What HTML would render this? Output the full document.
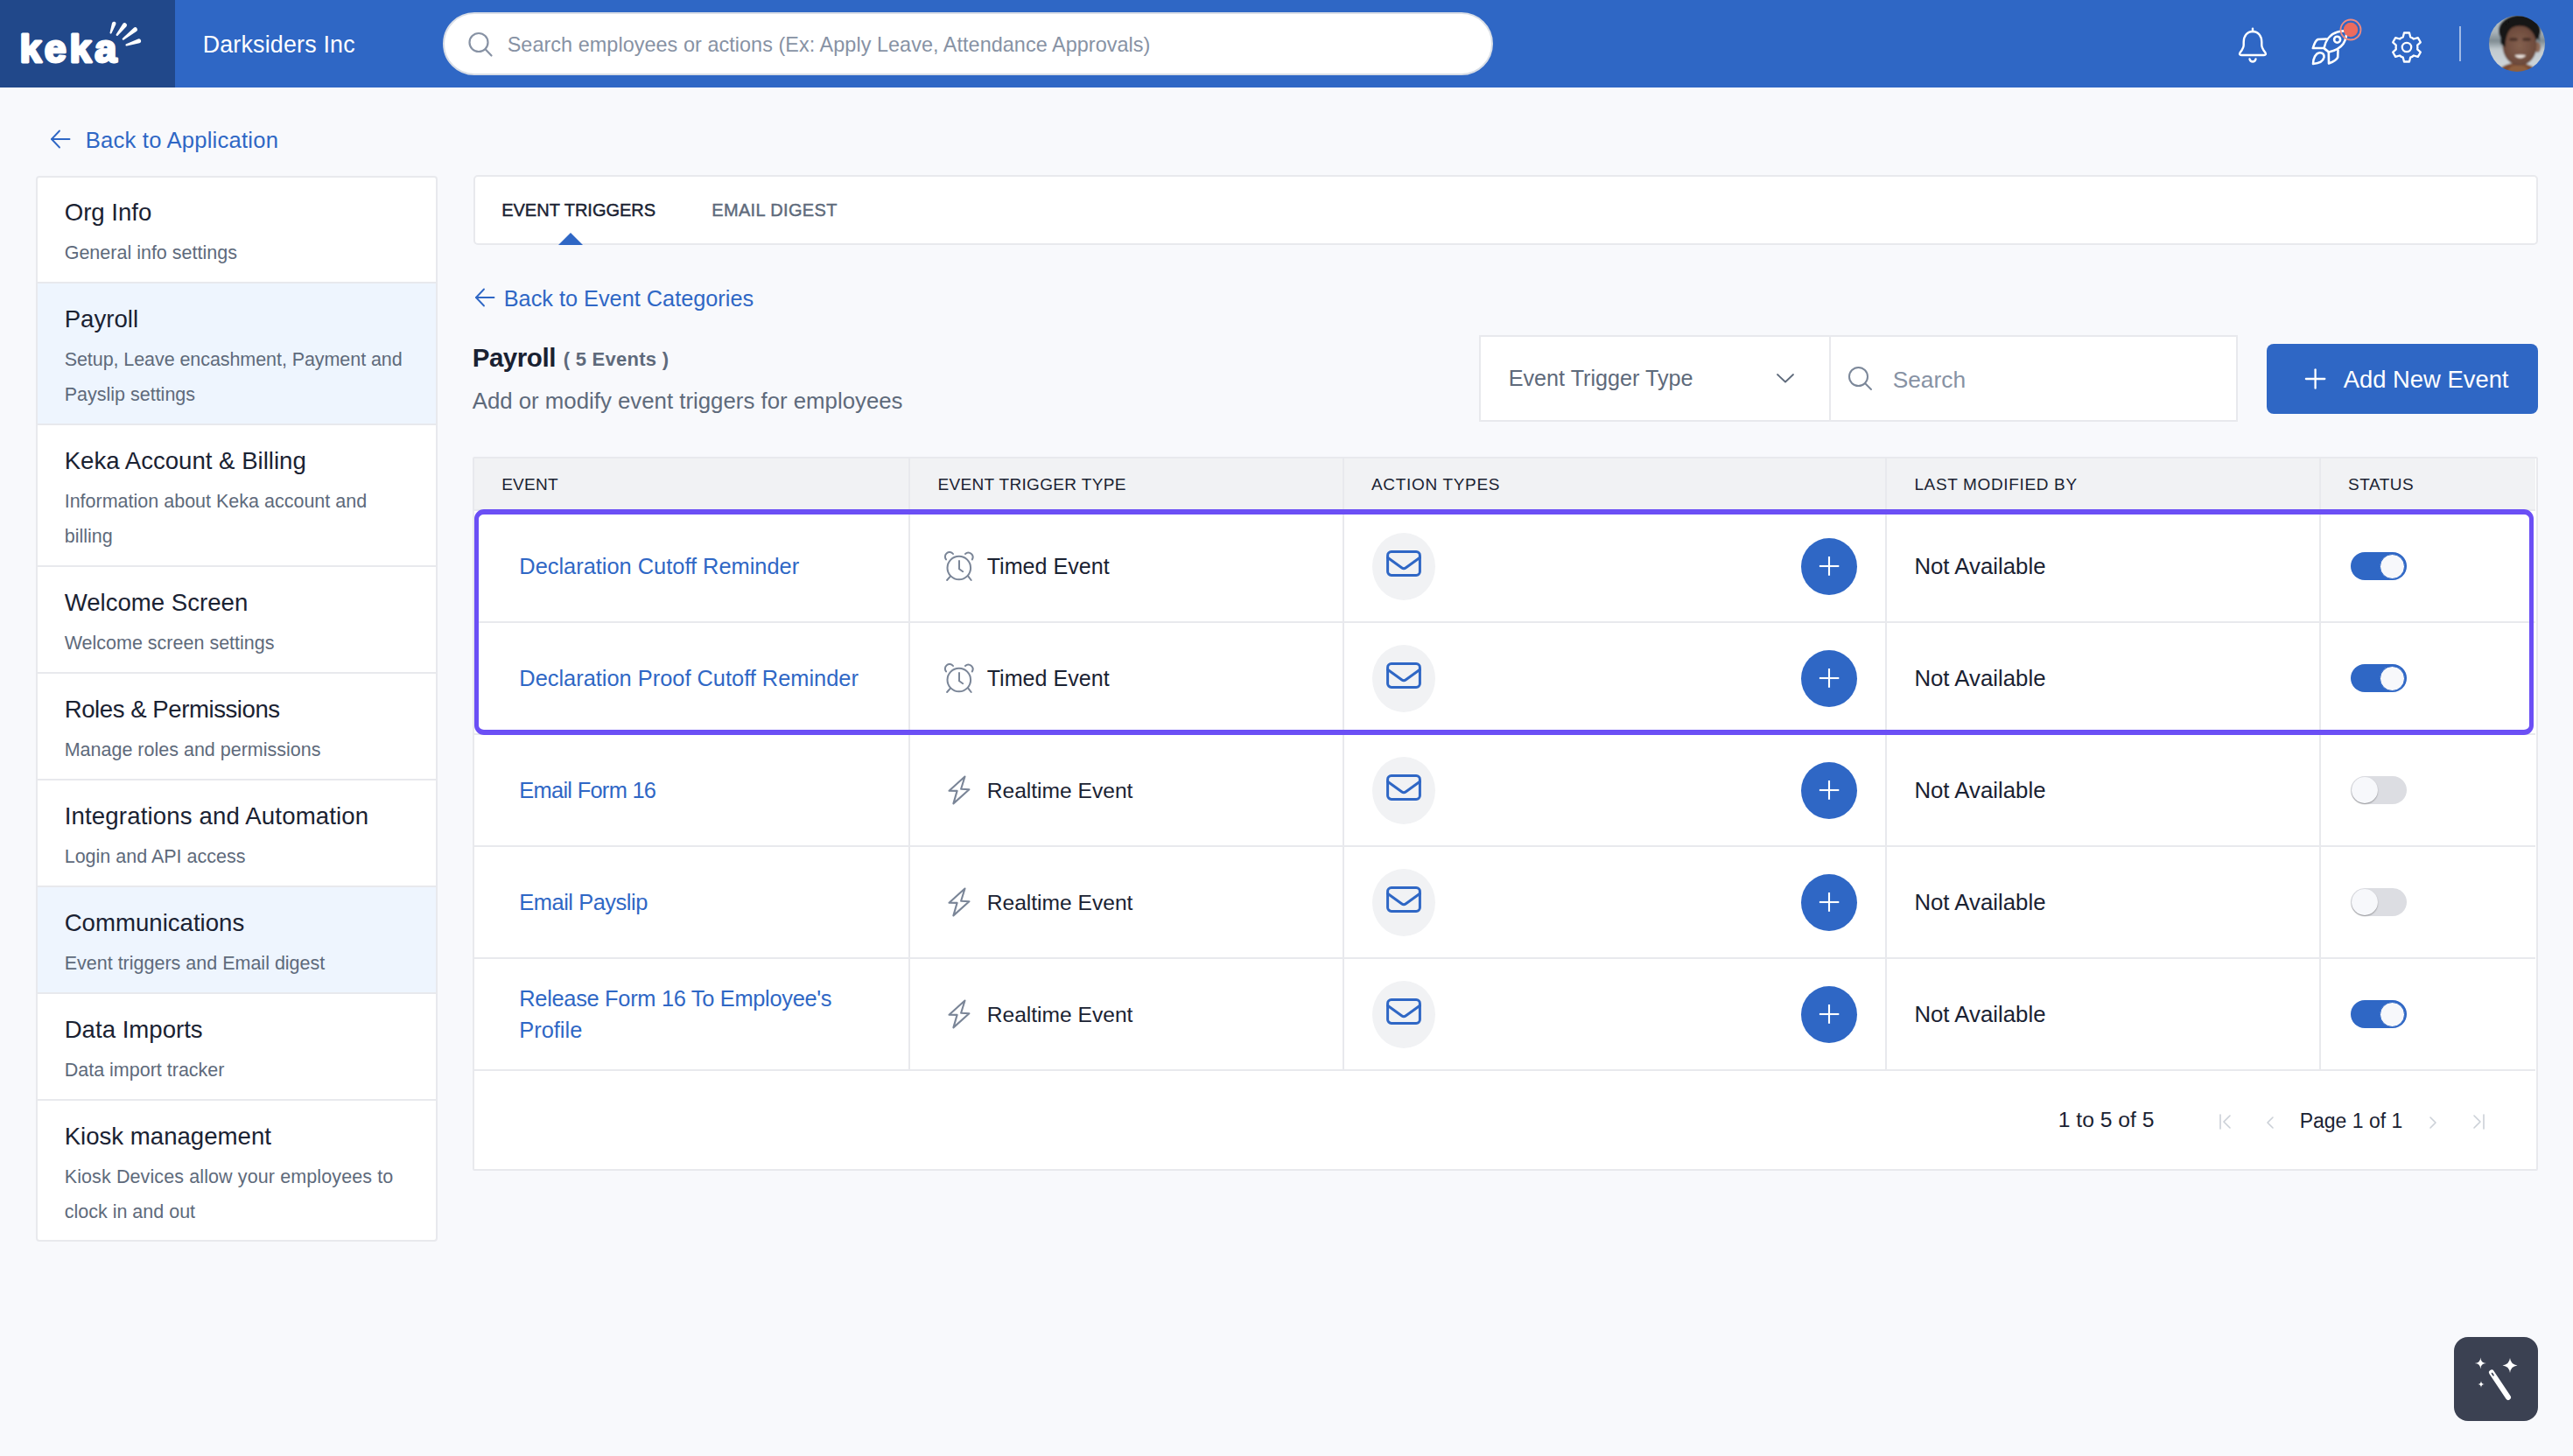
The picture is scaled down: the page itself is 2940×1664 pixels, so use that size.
<!DOCTYPE html>
<html><head><meta charset="utf-8"><title>Keka - Event Triggers</title>
<style>
html,body{margin:0;padding:0;}
html{overflow:hidden;background:#f8f9fc;}
body{width:2940px;height:1664px;overflow:hidden;position:relative;background:#f8f9fc;font-family:"Liberation Sans", sans-serif;}
.t{position:absolute;white-space:nowrap;}
svg{overflow:visible}
</style></head><body>
<div style="position:absolute;left:0px;top:0px;width:2940px;height:100px;background:#2f67c5"></div>
<div style="position:absolute;left:0px;top:0px;width:200px;height:100px;background:#21488a"></div>
<svg style="position:absolute;left:0px;top:0px;" width="200" height="100" viewBox="0 0 200 100"><text x="22.4 50.8 79.4 108.2" y="71" font-family="Liberation Sans" font-weight="700" font-size="45" fill="#fff" stroke="#fff" stroke-width="3" stroke-linejoin="round">keka</text></svg>
<svg style="position:absolute;left:0px;top:0px;" width="200" height="100" viewBox="0 0 200 100"><path d="M127.64 37.86 L132.38 27.75 A2.3 2.3 0 0 0 128.02 26.25 L125.56 37.14 A1.1 1.1 0 0 0 127.64 37.86 Z" fill="#fff"/><path d="M134.75 40.54 L144.55 30.19 A2.6 2.6 0 0 0 140.45 27.01 L132.85 39.06 A1.2 1.2 0 0 0 134.75 40.54 Z" fill="#fff"/><path d="M141.54 45.54 L156.11 35.84 A2.6 2.6 0 0 0 152.89 31.76 L140.06 43.66 A1.2 1.2 0 0 0 141.54 45.54 Z" fill="#fff"/><path d="M144.97 52.54 L159.38 49.18 A2.5 2.5 0 0 0 157.82 44.42 L144.23 50.26 A1.2 1.2 0 0 0 144.97 52.54 Z" fill="#fff"/></svg>
<div class="t" style="left:231.7px;top:37.81px;font-size:26.8px;line-height:26.8px;color:#fff;font-weight:400;letter-spacing:0.2px">Darksiders Inc</div>
<div style="position:absolute;left:506px;top:14px;width:1200px;height:72px;background:#fff;border-radius:36px;box-sizing:border-box;border:2px solid #d9dee6"></div>
<svg style="position:absolute;left:532px;top:34px;" width="34" height="34" viewBox="0 0 34 34"><g stroke="#8792a4" stroke-width="2.2" fill="none" stroke-linecap="round"><circle cx="15" cy="14.5" r="10.5"/><path d="M22.6 22.2 L29.5 29.5"/></g></svg>
<div class="t" style="left:579.7px;top:39.69px;font-size:23.4px;line-height:23.4px;color:#8792a4;font-weight:400;letter-spacing:0.06px">Search employees or actions (Ex: Apply Leave, Attendance Approvals)</div>
<svg style="position:absolute;left:2548px;top:26px;" width="52" height="52" viewBox="0 0 52 52"><g stroke="#fff" stroke-width="2.4" fill="none" stroke-linejoin="round" stroke-linecap="round"><path d="M26 10 C19.5 10 15.7 15.5 15.7 22 L15.7 25.5 C15.7 29 13.5 31.5 11.5 34.3 C10.5 35.8 11.2 37 13 37 L39 37 C40.8 37 41.5 35.8 40.5 34.3 C38.5 31.5 36.3 29 36.3 25.5 L36.3 22 C36.3 15.5 32.5 10 26 10 Z"/><path d="M26 6.8 L26 10"/><path d="M22.5 41.5 C23.5 45.5 28.5 45.5 29.5 41.5"/></g></svg>
<svg style="position:absolute;left:2630px;top:14px;" width="80" height="70" viewBox="0 0 80 70"><g stroke="#fff" stroke-width="2.6" fill="none" stroke-linejoin="round" stroke-linecap="round"><path d="M25.5 41 C27 33 32 25 41 22.5 C45 21.5 49 21.3 51 21.5 C51.5 25 50.5 31 47.5 36 C44 41 38 44 31 45.5 C29 44 27 42.5 25.5 41 Z"/><circle cx="40.6" cy="31.2" r="3.5"/><path d="M28 30.5 L18.5 31 C16 32 14 37 12.8 41 L25.5 41"/><path d="M41.5 43.5 L41.2 51.5 C40 54.5 35 57 31 58.5 L30.8 45.5"/><path d="M13 59 C13 53 16 46.5 20.5 46.2 C24 46 26 48.5 25.5 51.5 C24.5 56 19 58.5 13 59 Z"/></g></svg>
<svg style="position:absolute;left:2672px;top:20px;" width="28" height="28" viewBox="0 0 28 28"><circle cx="14" cy="14" r="11.5" fill="none" stroke="#ef8a80" stroke-width="1.8"/><circle cx="14" cy="14" r="8.2" fill="#ec6b5e"/></svg>
<svg style="position:absolute;left:2731px;top:35px;" width="38" height="38" viewBox="0 0 38 38"><g stroke="#fff" stroke-width="2.3" fill="none" stroke-linejoin="round"><path d="M16 2.5 L22 2.5 L23.2 7.3 C24.6 7.8 25.9 8.6 27 9.5 L31.8 8.1 L34.8 13.3 L31.2 16.7 C31.4 18.2 31.4 19.8 31.2 21.3 L34.8 24.7 L31.8 29.9 L27 28.5 C25.9 29.4 24.6 30.2 23.2 30.7 L22 35.5 L16 35.5 L14.8 30.7 C13.4 30.2 12.1 29.4 11 28.5 L6.2 29.9 L3.2 24.7 L6.8 21.3 C6.6 19.8 6.6 18.2 6.8 16.7 L3.2 13.3 L6.2 8.1 L11 9.5 C12.1 8.6 13.4 7.8 14.8 7.3 Z"/><circle cx="19" cy="19" r="5.2"/></g></svg>
<div style="position:absolute;left:2810px;top:30px;width:2px;height:40px;background:rgba(255,255,255,0.55)"></div>
<svg style="position:absolute;left:2844px;top:18px;" width="64" height="64" viewBox="0 0 64 64"><defs><clipPath id="avc"><circle cx="32" cy="32" r="32"/></clipPath><linearGradient id="avbg" x1="0" y1="0" x2="0" y2="1"><stop offset="0" stop-color="#b9c3c8"/><stop offset="0.3" stop-color="#aab4ba"/><stop offset="0.45" stop-color="#7f8b92"/><stop offset="0.6" stop-color="#c2cacf"/><stop offset="0.85" stop-color="#cdd4d8"/><stop offset="1" stop-color="#9aa3a8"/></linearGradient><radialGradient id="avface" cx="0.5" cy="0.5" r="0.6"><stop offset="0" stop-color="#84604f"/><stop offset="0.7" stop-color="#704d3e"/><stop offset="1" stop-color="#5e4034"/></radialGradient><filter id="avbl"><feGaussianBlur stdDeviation="0.8"/></filter></defs><g clip-path="url(#avc)"><g filter="url(#avbl)"><rect x="-2" y="-2" width="68" height="68" fill="url(#avbg)"/><path d="M10 68 C12 58 20 54 32 54 C44 54 54 58 56 68 Z" fill="#7a4c33"/><path d="M20 66 C22 60 26 57 30 57 L38 57 C42 58 46 61 47 66 Z" fill="#8d5e40"/><ellipse cx="35" cy="17" rx="24" ry="18" fill="#121212"/><ellipse cx="55.5" cy="36" rx="3.5" ry="6" fill="#8e6a58"/><ellipse cx="35" cy="34" rx="19.5" ry="23" fill="url(#avface)"/><path d="M13.5 32 C12 14 22 3 35 3 C48 3 57.5 11 58 30 C54 18 46 11.5 35 11.5 C25 11.5 19.5 17 18.5 36 Z" fill="#121212"/><ellipse cx="28" cy="27" rx="5" ry="2" fill="#3a2720" opacity="0.7"/><ellipse cx="43" cy="27" rx="5" ry="2" fill="#3a2720" opacity="0.7"/><path d="M29.5 45 C33 44.2 38 44.2 42 45 C40 49.5 31.5 49.5 29.5 45 Z" fill="#e9e0da"/></g></g></svg>
<svg style="position:absolute;left:56px;top:146px;" width="28" height="26" viewBox="0 0 28 26"><g stroke="#2f67c5" stroke-width="1.85" fill="none" stroke-linecap="round" stroke-linejoin="round"><path d="M3 13 L23.5 13"/><path d="M12 3.5 L3 13 L12 22.5"/></g></svg>
<div class="t" style="left:97.7px;top:147.83px;font-size:25.6px;line-height:25.6px;color:#2f67c5;font-weight:400;letter-spacing:0.22px">Back to Application</div>
<div style="position:absolute;left:41px;top:201px;width:459px;height:1218px;background:#fff;box-sizing:border-box;border:2px solid #e8e9ed;border-radius:4px"></div>
<div class="t" style="left:73.7px;top:229.14px;font-size:27.6px;line-height:27.6px;color:#1a2232;font-weight:400;">Org Info</div>
<div class="t" style="left:73.7px;top:278.80px;font-size:21.5px;line-height:21.5px;color:#5e6a7b;font-weight:400;">General info settings</div>
<div style="position:absolute;left:43px;top:324px;width:455px;height:161px;background:#eef5fe"></div>
<div style="position:absolute;left:43px;top:322px;width:455px;height:2px;background:#e8e9ed"></div>
<div class="t" style="left:73.7px;top:351.14px;font-size:27.6px;line-height:27.6px;color:#1a2232;font-weight:400;">Payroll</div>
<div class="t" style="left:73.7px;top:400.80px;font-size:21.5px;line-height:21.5px;color:#5e6a7b;font-weight:400;letter-spacing:-0.07px">Setup, Leave encashment, Payment and</div>
<div class="t" style="left:73.7px;top:440.80px;font-size:21.5px;line-height:21.5px;color:#5e6a7b;font-weight:400;">Payslip settings</div>
<div style="position:absolute;left:43px;top:484px;width:455px;height:2px;background:#e8e9ed"></div>
<div class="t" style="left:73.7px;top:513.14px;font-size:27.6px;line-height:27.6px;color:#1a2232;font-weight:400;">Keka Account &amp; Billing</div>
<div class="t" style="left:73.7px;top:562.80px;font-size:21.5px;line-height:21.5px;color:#5e6a7b;font-weight:400;">Information about Keka account and</div>
<div class="t" style="left:73.7px;top:602.80px;font-size:21.5px;line-height:21.5px;color:#5e6a7b;font-weight:400;">billing</div>
<div style="position:absolute;left:43px;top:646px;width:455px;height:2px;background:#e8e9ed"></div>
<div class="t" style="left:73.7px;top:675.14px;font-size:27.6px;line-height:27.6px;color:#1a2232;font-weight:400;">Welcome Screen</div>
<div class="t" style="left:73.7px;top:724.80px;font-size:21.5px;line-height:21.5px;color:#5e6a7b;font-weight:400;">Welcome screen settings</div>
<div style="position:absolute;left:43px;top:768px;width:455px;height:2px;background:#e8e9ed"></div>
<div class="t" style="left:73.7px;top:797.14px;font-size:27.6px;line-height:27.6px;color:#1a2232;font-weight:400;letter-spacing:-0.45px">Roles &amp; Permissions</div>
<div class="t" style="left:73.7px;top:846.80px;font-size:21.5px;line-height:21.5px;color:#5e6a7b;font-weight:400;">Manage roles and permissions</div>
<div style="position:absolute;left:43px;top:890px;width:455px;height:2px;background:#e8e9ed"></div>
<div class="t" style="left:73.7px;top:919.14px;font-size:27.6px;line-height:27.6px;color:#1a2232;font-weight:400;letter-spacing:0.15px">Integrations and Automation</div>
<div class="t" style="left:73.7px;top:968.80px;font-size:21.5px;line-height:21.5px;color:#5e6a7b;font-weight:400;">Login and API access</div>
<div style="position:absolute;left:43px;top:1014px;width:455px;height:121px;background:#eef5fe"></div>
<div style="position:absolute;left:43px;top:1012px;width:455px;height:2px;background:#e8e9ed"></div>
<div class="t" style="left:73.7px;top:1041.14px;font-size:27.6px;line-height:27.6px;color:#1a2232;font-weight:400;">Communications</div>
<div class="t" style="left:73.7px;top:1090.80px;font-size:21.5px;line-height:21.5px;color:#5e6a7b;font-weight:400;">Event triggers and Email digest</div>
<div style="position:absolute;left:43px;top:1134px;width:455px;height:2px;background:#e8e9ed"></div>
<div class="t" style="left:73.7px;top:1163.14px;font-size:27.6px;line-height:27.6px;color:#1a2232;font-weight:400;">Data Imports</div>
<div class="t" style="left:73.7px;top:1212.80px;font-size:21.5px;line-height:21.5px;color:#5e6a7b;font-weight:400;">Data import tracker</div>
<div style="position:absolute;left:43px;top:1256px;width:455px;height:2px;background:#e8e9ed"></div>
<div class="t" style="left:73.7px;top:1285.14px;font-size:27.6px;line-height:27.6px;color:#1a2232;font-weight:400;">Kiosk management</div>
<div class="t" style="left:73.7px;top:1334.80px;font-size:21.5px;line-height:21.5px;color:#5e6a7b;font-weight:400;letter-spacing:0.11px">Kiosk Devices allow your employees to</div>
<div class="t" style="left:73.7px;top:1374.80px;font-size:21.5px;line-height:21.5px;color:#5e6a7b;font-weight:400;">clock in and out</div>
<div style="position:absolute;left:541px;top:200px;width:2359px;height:80px;background:#fff;box-sizing:border-box;border:2px solid #e8e9ed;border-radius:5px"></div>
<div class="t" style="left:573.2px;top:230.07px;font-size:20px;line-height:20px;color:#1a2232;font-weight:400;-webkit-text-stroke:0.45px #1a2232">EVENT TRIGGERS</div>
<div class="t" style="left:813.2px;top:230.07px;font-size:20px;line-height:20px;color:#5e6a7b;font-weight:400;letter-spacing:0.36px;-webkit-text-stroke:0.45px #5e6a7b">EMAIL DIGEST</div>
<svg style="position:absolute;left:637px;top:265px;" width="30" height="16" viewBox="0 0 30 16"><path d="M1 15 L15 1 L29 15 Z" fill="#2f67c5"/></svg>
<svg style="position:absolute;left:541px;top:327px;" width="28" height="26" viewBox="0 0 28 26"><g stroke="#2f67c5" stroke-width="1.85" fill="none" stroke-linecap="round" stroke-linejoin="round"><path d="M3 13 L23.5 13"/><path d="M12 3.5 L3 13 L12 22.5"/></g></svg>
<div class="t" style="left:575.7px;top:328.58px;font-size:25.3px;line-height:25.3px;color:#2f67c5;font-weight:400;">Back to Event Categories</div>
<div class="t" style="left:539.7px;top:394.03px;font-size:29.5px;line-height:29.5px;color:#1a2232;font-weight:700;letter-spacing:-0.45px">Payroll</div>
<div class="t" style="left:643.7px;top:400.38px;font-size:22px;line-height:22px;color:#5e6a7b;font-weight:700;letter-spacing:0.27px">( 5 Events )</div>
<div class="t" style="left:539.7px;top:446.16px;font-size:25.8px;line-height:25.8px;color:#5e6a7b;font-weight:400;">Add or modify event triggers for employees</div>
<div style="position:absolute;left:1690px;top:383px;width:867px;height:99px;background:#fff;box-sizing:border-box;border:2px solid #e8e9ed"></div>
<div style="position:absolute;left:2090px;top:385px;width:2px;height:95px;background:#e8e9ed"></div>
<div class="t" style="left:1723.7px;top:419.67px;font-size:25.2px;line-height:25.2px;color:#5e6a7b;font-weight:400;">Event Trigger Type</div>
<svg style="position:absolute;left:2028px;top:424px;" width="24" height="16" viewBox="0 0 24 16"><path d="M3 4 L12 12.5 L21 4" stroke="#5e6a7b" stroke-width="1.8" fill="none" stroke-linecap="round" stroke-linejoin="round"/></svg>
<svg style="position:absolute;left:2109px;top:416px;" width="34" height="34" viewBox="0 0 34 34"><g stroke="#7b8799" stroke-width="2" fill="none" stroke-linecap="round"><circle cx="14.5" cy="14.5" r="10.5"/><path d="M22 22 L29 29"/></g></svg>
<div class="t" style="left:2162.7px;top:420.74px;font-size:26.3px;line-height:26.3px;color:#8792a4;font-weight:400;">Search</div>
<div style="position:absolute;left:2590px;top:393px;width:310px;height:80px;background:#2f67c5;border-radius:8px"></div>
<svg style="position:absolute;left:2630px;top:418px;" width="30" height="30" viewBox="0 0 30 30"><g stroke="#fff" stroke-width="2.3" stroke-linecap="round"><path d="M15.6 4.3 L15.6 25.7"/><path d="M4.9 15 L26.3 15"/></g></svg>
<div class="t" style="left:2677.7px;top:420.31px;font-size:27.4px;line-height:27.4px;color:#fff;font-weight:400;">Add New Event</div>
<div style="position:absolute;left:540px;top:522px;width:2360px;height:816px;background:#fff;box-sizing:border-box;border:2px solid #e8e9ed;border-radius:2px;overflow:hidden"></div>
<div style="position:absolute;left:542px;top:524px;width:2355px;height:59px;background:#f1f2f4"></div>
<div style="position:absolute;left:1038px;top:524px;width:2px;height:699px;background:#e8e9ed"></div>
<div style="position:absolute;left:1534px;top:524px;width:2px;height:699px;background:#e8e9ed"></div>
<div style="position:absolute;left:2154px;top:524px;width:2px;height:699px;background:#e8e9ed"></div>
<div style="position:absolute;left:2650px;top:524px;width:2px;height:699px;background:#e8e9ed"></div>
<div class="t" style="left:573.2px;top:544.42px;font-size:19px;line-height:19px;color:#1a2232;font-weight:400;letter-spacing:0.25px">EVENT</div>
<div class="t" style="left:1071.5px;top:544.42px;font-size:19px;line-height:19px;color:#1a2232;font-weight:400;letter-spacing:0.34px">EVENT TRIGGER TYPE</div>
<div class="t" style="left:1566.9px;top:544.42px;font-size:19px;line-height:19px;color:#1a2232;font-weight:400;letter-spacing:0.69px">ACTION TYPES</div>
<div class="t" style="left:2187.4px;top:544.42px;font-size:19px;line-height:19px;color:#1a2232;font-weight:400;letter-spacing:0.65px">LAST MODIFIED BY</div>
<div class="t" style="left:2683.1px;top:544.42px;font-size:19px;line-height:19px;color:#1a2232;font-weight:400;letter-spacing:0.5px">STATUS</div>
<div style="position:absolute;left:542px;top:582px;width:2355px;height:2px;background:#e8e9ed"></div>
<div style="position:absolute;left:542px;top:710px;width:2355px;height:2px;background:#e8e9ed"></div>
<div style="position:absolute;left:542px;top:838px;width:2355px;height:2px;background:#e8e9ed"></div>
<div style="position:absolute;left:542px;top:966px;width:2355px;height:2px;background:#e8e9ed"></div>
<div style="position:absolute;left:542px;top:1094px;width:2355px;height:2px;background:#e8e9ed"></div>
<div style="position:absolute;left:542px;top:1222px;width:2355px;height:2px;background:#e8e9ed"></div>
<div class="t" style="left:593.3px;top:635.00px;font-size:25.4px;line-height:25.4px;color:#2f67c5;font-weight:400;">Declaration Cutoff Reminder</div>
<svg style="position:absolute;left:1070px;top:620px;" width="50" height="55" viewBox="0 0 50 55"><g stroke="#7a8597" stroke-width="2" fill="none" stroke-linecap="round" stroke-linejoin="round"><circle cx="25.8" cy="29" r="13.3"/><path d="M26 21.1 L26 30.2 L30.2 33.2"/><path d="M11 19.4 A5.1 5.1 0 0 1 19 13"/><path d="M33 13 A5.1 5.1 0 0 1 40.8 19.4"/><path d="M15.9 38.7 L12.1 43"/><path d="M36.3 38.7 L39.7 43"/></g></svg>
<div class="t" style="left:1127.7px;top:635.25px;font-size:25.1px;line-height:25.1px;color:#1a2232;font-weight:400;">Timed Event</div>
<div style="position:absolute;left:1568px;top:609px;width:72px;height:77px;background:#f1f2f4;border-radius:50%"></div>
<svg style="position:absolute;left:1580px;top:623px;" width="48" height="40" viewBox="0 0 48 40"><g stroke="#2f67c5" stroke-width="3" fill="none" stroke-linejoin="round" stroke-linecap="round"><rect x="5.6" y="7.5" width="36.8" height="26.9" rx="4.2"/><path d="M5.6 14.3 L21.5 25.8 Q24 27.6 26.5 25.8 L42.4 14.3"/></g></svg>
<div style="position:absolute;left:2058px;top:615px;width:64px;height:65px;background:#2f67c5;border-radius:50%"></div>
<svg style="position:absolute;left:2078px;top:635px;" width="24" height="24" viewBox="0 0 24 24"><g stroke="#fff" stroke-width="2.1"><path d="M12 1 L12 22.8"/><path d="M0.9 12 L23.3 12"/></g></svg>
<div class="t" style="left:2187.4px;top:634.96px;font-size:25.8px;line-height:25.8px;color:#1a2232;font-weight:400;">Not Available</div>
<div style="position:absolute;left:2686px;top:631px;width:64px;height:32px;background:#2f67c5;border-radius:16px"></div>
<div style="position:absolute;left:2719px;top:633px;width:29px;height:29px;background:#f7f8fb;border-radius:50%;box-sizing:border-box;border:1.5px solid #2f67c5"></div>
<div class="t" style="left:593.3px;top:763.00px;font-size:25.4px;line-height:25.4px;color:#2f67c5;font-weight:400;">Declaration Proof Cutoff Reminder</div>
<svg style="position:absolute;left:1070px;top:748px;" width="50" height="55" viewBox="0 0 50 55"><g stroke="#7a8597" stroke-width="2" fill="none" stroke-linecap="round" stroke-linejoin="round"><circle cx="25.8" cy="29" r="13.3"/><path d="M26 21.1 L26 30.2 L30.2 33.2"/><path d="M11 19.4 A5.1 5.1 0 0 1 19 13"/><path d="M33 13 A5.1 5.1 0 0 1 40.8 19.4"/><path d="M15.9 38.7 L12.1 43"/><path d="M36.3 38.7 L39.7 43"/></g></svg>
<div class="t" style="left:1127.7px;top:763.25px;font-size:25.1px;line-height:25.1px;color:#1a2232;font-weight:400;">Timed Event</div>
<div style="position:absolute;left:1568px;top:737px;width:72px;height:77px;background:#f1f2f4;border-radius:50%"></div>
<svg style="position:absolute;left:1580px;top:751px;" width="48" height="40" viewBox="0 0 48 40"><g stroke="#2f67c5" stroke-width="3" fill="none" stroke-linejoin="round" stroke-linecap="round"><rect x="5.6" y="7.5" width="36.8" height="26.9" rx="4.2"/><path d="M5.6 14.3 L21.5 25.8 Q24 27.6 26.5 25.8 L42.4 14.3"/></g></svg>
<div style="position:absolute;left:2058px;top:743px;width:64px;height:65px;background:#2f67c5;border-radius:50%"></div>
<svg style="position:absolute;left:2078px;top:763px;" width="24" height="24" viewBox="0 0 24 24"><g stroke="#fff" stroke-width="2.1"><path d="M12 1 L12 22.8"/><path d="M0.9 12 L23.3 12"/></g></svg>
<div class="t" style="left:2187.4px;top:762.96px;font-size:25.8px;line-height:25.8px;color:#1a2232;font-weight:400;">Not Available</div>
<div style="position:absolute;left:2686px;top:759px;width:64px;height:32px;background:#2f67c5;border-radius:16px"></div>
<div style="position:absolute;left:2719px;top:761px;width:29px;height:29px;background:#f7f8fb;border-radius:50%;box-sizing:border-box;border:1.5px solid #2f67c5"></div>
<div class="t" style="left:593.3px;top:891.00px;font-size:25.4px;line-height:25.4px;color:#2f67c5;font-weight:400;letter-spacing:-0.7px">Email Form 16</div>
<svg style="position:absolute;left:1070px;top:875px;" width="50" height="55" viewBox="0 0 50 55"><path d="M32.5 12.5 L14.5 28.7 L23.6 28.9 L19.4 43.4 L37.4 27.2 L28.1 26.8 Z" stroke="#7a8597" stroke-width="2.1" fill="none" stroke-linejoin="round"/></svg>
<div class="t" style="left:1127.7px;top:891.68px;font-size:24.6px;line-height:24.6px;color:#1a2232;font-weight:400;">Realtime Event</div>
<div style="position:absolute;left:1568px;top:865px;width:72px;height:77px;background:#f1f2f4;border-radius:50%"></div>
<svg style="position:absolute;left:1580px;top:879px;" width="48" height="40" viewBox="0 0 48 40"><g stroke="#2f67c5" stroke-width="3" fill="none" stroke-linejoin="round" stroke-linecap="round"><rect x="5.6" y="7.5" width="36.8" height="26.9" rx="4.2"/><path d="M5.6 14.3 L21.5 25.8 Q24 27.6 26.5 25.8 L42.4 14.3"/></g></svg>
<div style="position:absolute;left:2058px;top:871px;width:64px;height:65px;background:#2f67c5;border-radius:50%"></div>
<svg style="position:absolute;left:2078px;top:891px;" width="24" height="24" viewBox="0 0 24 24"><g stroke="#fff" stroke-width="2.1"><path d="M12 1 L12 22.8"/><path d="M0.9 12 L23.3 12"/></g></svg>
<div class="t" style="left:2187.4px;top:890.96px;font-size:25.8px;line-height:25.8px;color:#1a2232;font-weight:400;">Not Available</div>
<div style="position:absolute;left:2686px;top:887px;width:64px;height:32px;background:#dcdde2;border-radius:16px"></div>
<div style="position:absolute;left:2687px;top:888px;width:30px;height:30px;background:#f7f8fb;border-radius:50%;box-shadow:0 1px 1.5px rgba(0,0,0,0.35)"></div>
<div class="t" style="left:593.3px;top:1019.00px;font-size:25.4px;line-height:25.4px;color:#2f67c5;font-weight:400;letter-spacing:-0.45px">Email Payslip</div>
<svg style="position:absolute;left:1070px;top:1003px;" width="50" height="55" viewBox="0 0 50 55"><path d="M32.5 12.5 L14.5 28.7 L23.6 28.9 L19.4 43.4 L37.4 27.2 L28.1 26.8 Z" stroke="#7a8597" stroke-width="2.1" fill="none" stroke-linejoin="round"/></svg>
<div class="t" style="left:1127.7px;top:1019.68px;font-size:24.6px;line-height:24.6px;color:#1a2232;font-weight:400;">Realtime Event</div>
<div style="position:absolute;left:1568px;top:993px;width:72px;height:77px;background:#f1f2f4;border-radius:50%"></div>
<svg style="position:absolute;left:1580px;top:1007px;" width="48" height="40" viewBox="0 0 48 40"><g stroke="#2f67c5" stroke-width="3" fill="none" stroke-linejoin="round" stroke-linecap="round"><rect x="5.6" y="7.5" width="36.8" height="26.9" rx="4.2"/><path d="M5.6 14.3 L21.5 25.8 Q24 27.6 26.5 25.8 L42.4 14.3"/></g></svg>
<div style="position:absolute;left:2058px;top:999px;width:64px;height:65px;background:#2f67c5;border-radius:50%"></div>
<svg style="position:absolute;left:2078px;top:1019px;" width="24" height="24" viewBox="0 0 24 24"><g stroke="#fff" stroke-width="2.1"><path d="M12 1 L12 22.8"/><path d="M0.9 12 L23.3 12"/></g></svg>
<div class="t" style="left:2187.4px;top:1018.96px;font-size:25.8px;line-height:25.8px;color:#1a2232;font-weight:400;">Not Available</div>
<div style="position:absolute;left:2686px;top:1015px;width:64px;height:32px;background:#dcdde2;border-radius:16px"></div>
<div style="position:absolute;left:2687px;top:1016px;width:30px;height:30px;background:#f7f8fb;border-radius:50%;box-shadow:0 1px 1.5px rgba(0,0,0,0.35)"></div>
<div class="t" style="left:593.3px;top:1129.00px;font-size:25.4px;line-height:25.4px;color:#2f67c5;font-weight:400;letter-spacing:-0.3px">Release Form 16 To Employee's</div>
<div class="t" style="left:593.3px;top:1164.50px;font-size:25.4px;line-height:25.4px;color:#2f67c5;font-weight:400;">Profile</div>
<svg style="position:absolute;left:1070px;top:1131px;" width="50" height="55" viewBox="0 0 50 55"><path d="M32.5 12.5 L14.5 28.7 L23.6 28.9 L19.4 43.4 L37.4 27.2 L28.1 26.8 Z" stroke="#7a8597" stroke-width="2.1" fill="none" stroke-linejoin="round"/></svg>
<div class="t" style="left:1127.7px;top:1147.68px;font-size:24.6px;line-height:24.6px;color:#1a2232;font-weight:400;">Realtime Event</div>
<div style="position:absolute;left:1568px;top:1121px;width:72px;height:77px;background:#f1f2f4;border-radius:50%"></div>
<svg style="position:absolute;left:1580px;top:1135px;" width="48" height="40" viewBox="0 0 48 40"><g stroke="#2f67c5" stroke-width="3" fill="none" stroke-linejoin="round" stroke-linecap="round"><rect x="5.6" y="7.5" width="36.8" height="26.9" rx="4.2"/><path d="M5.6 14.3 L21.5 25.8 Q24 27.6 26.5 25.8 L42.4 14.3"/></g></svg>
<div style="position:absolute;left:2058px;top:1127px;width:64px;height:65px;background:#2f67c5;border-radius:50%"></div>
<svg style="position:absolute;left:2078px;top:1147px;" width="24" height="24" viewBox="0 0 24 24"><g stroke="#fff" stroke-width="2.1"><path d="M12 1 L12 22.8"/><path d="M0.9 12 L23.3 12"/></g></svg>
<div class="t" style="left:2187.4px;top:1146.96px;font-size:25.8px;line-height:25.8px;color:#1a2232;font-weight:400;">Not Available</div>
<div style="position:absolute;left:2686px;top:1143px;width:64px;height:32px;background:#2f67c5;border-radius:16px"></div>
<div style="position:absolute;left:2719px;top:1145px;width:29px;height:29px;background:#f7f8fb;border-radius:50%;box-sizing:border-box;border:1.5px solid #2f67c5"></div>
<div style="position:absolute;left:542px;top:582px;width:2353px;height:258px;box-sizing:border-box;border-style:solid;border-color:#6b4ff5;border-width:6px 5px;border-radius:11px"></div>
<div class="t" style="left:2351.7px;top:1268.39px;font-size:24.7px;line-height:24.7px;color:#1a2232;font-weight:400;">1 to 5 of 5</div>
<svg style="position:absolute;left:2534px;top:1272px;" width="18" height="20" viewBox="0 0 18 20"><g stroke="#cbd0d7" stroke-width="1.6" fill="none" stroke-linecap="round" stroke-linejoin="round"><path d="M3 2 L3 18"/><path d="M14 3 L7 10 L14 17"/></g></svg>
<svg style="position:absolute;left:2587px;top:1274px;" width="14" height="18" viewBox="0 0 14 18"><g stroke="#cbd0d7" stroke-width="1.6" fill="none" stroke-linecap="round" stroke-linejoin="round"><path d="M10 3 L4 9 L10 15"/></g></svg>
<div class="t" style="left:2627.7px;top:1269.83px;font-size:23px;line-height:23px;color:#1a2232;font-weight:400;">Page 1 of 1</div>
<svg style="position:absolute;left:2773px;top:1274px;" width="14" height="18" viewBox="0 0 14 18"><g stroke="#cbd0d7" stroke-width="1.6" fill="none" stroke-linecap="round" stroke-linejoin="round"><path d="M4 3 L10 9 L4 15"/></g></svg>
<svg style="position:absolute;left:2823px;top:1272px;" width="18" height="20" viewBox="0 0 18 20"><g stroke="#cbd0d7" stroke-width="1.6" fill="none" stroke-linecap="round" stroke-linejoin="round"><path d="M15 2 L15 18"/><path d="M4 3 L11 10 L4 17"/></g></svg>
<div style="position:absolute;left:2804px;top:1528px;width:96px;height:96px;background:#3b4152;border-radius:16px"></div>
<svg style="position:absolute;left:2804px;top:1528px;" width="96" height="96" viewBox="0 0 96 96"><path d="M30.3 23.5 Q30.560000000000002 29.74 36.8 30 Q30.560000000000002 30.26 30.3 36.5 Q30.04 30.26 23.8 30 Q30.04 29.74 30.3 23.5 Z" fill="#fff"/><path d="M64 24.0 Q64.935 31.565 72.5 32.5 Q64.935 33.435 64 41.0 Q63.065 33.435 55.5 32.5 Q63.065 31.565 64 24.0 Z" fill="#fff"/><path d="M31 50 Q31.16 53.84 35 54 Q31.16 54.16 31 58 Q30.84 54.16 27 54 Q30.84 53.84 31 50 Z" fill="#fff"/><path d="M43 40.5 L62 69" stroke="#fff" stroke-width="6" stroke-linecap="round"/><path d="M43.5 41.5 L45 43.8" stroke="#3b4152" stroke-width="1.6" stroke-linecap="round"/></svg>
<script>(function(){var s=window.innerWidth/2940;if(s>0&&Math.abs(s-1)>0.002){document.body.style.transformOrigin='0 0';document.body.style.transform='scale('+s+')';}})();</script>
</body></html>
